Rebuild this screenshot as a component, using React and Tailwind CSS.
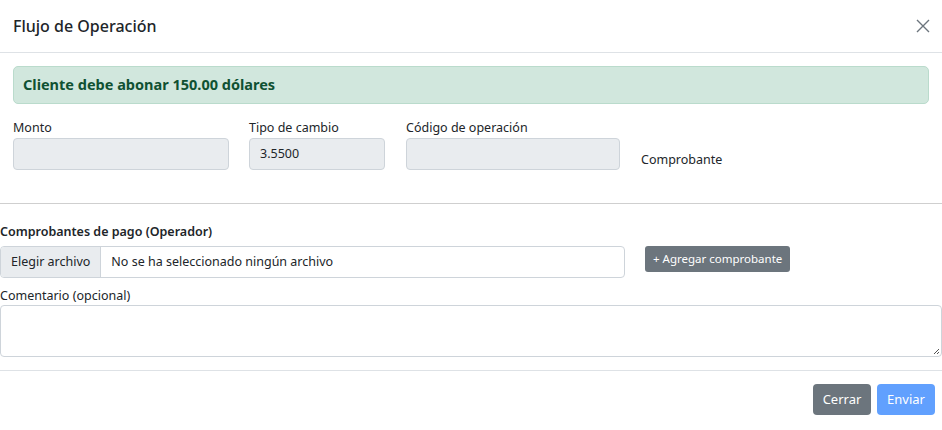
export default function App() {
  return (
    <div className="w-[942px] h-[430px] overflow-hidden bg-white text-[#212529] font-['Noto_Sans',sans-serif]">
      {/* header */}
      <div className="flex items-center justify-between h-[53px] border-b border-[#dee2e6] pl-[13px] pr-[8px]">
        <h5 className="text-[16px] font-medium leading-none">Flujo de Operación</h5>
        <button className="w-[22px] h-[22px] flex items-center justify-center text-[#6c757d]">
          <svg width="14" height="14" viewBox="0 0 14 14" fill="none" stroke="currentColor" strokeWidth="1.4">
            <path d="M1 1L13 13M13 1L1 13" />
          </svg>
        </button>
      </div>

      {/* body */}
      <div className="px-[13px] pt-[13px]">
        <div className="h-[38px] flex items-center px-[9px] rounded-[5px] bg-[#d1e7dd] border border-[#badbcc] text-[#0f5132] font-bold text-[14.5px]">
          Cliente debe abonar 150.00 dólares
        </div>

        <div className="flex items-end mt-[14px] text-[12.5px]">
          <div className="w-[216px]">
            <label className="block leading-[20px]">Monto</label>
            <div className="h-[32px] rounded-[4px] bg-[#e9ecef] border border-[#ced4da]" />
          </div>
          <div className="w-[136px] ml-[20px]">
            <label className="block leading-[20px]">Tipo de cambio</label>
            <div className="h-[32px] rounded-[4px] bg-[#e9ecef] border border-[#ced4da] flex items-center px-[10px]">3.5500</div>
          </div>
          <div className="w-[214px] ml-[21px]">
            <label className="block leading-[20px]">Código de operación</label>
            <div className="h-[32px] rounded-[4px] bg-[#e9ecef] border border-[#ced4da]" />
          </div>
          <div className="ml-[21px] leading-[20px]">Comprobante</div>
        </div>
      </div>

      <div className="mt-[33px] border-t border-[#cfcfcf]" />

      {/* comprobantes */}
      <div className="text-[12.5px]">
        <div className="mt-[18px] font-semibold leading-[20px]">Comprobantes de pago (Operador)</div>
        <div className="flex items-start mt-[4px]">
          <div className="w-[625px] h-[32px] flex rounded-[4px] border border-[#ced4da] overflow-hidden">
            <div className="px-[10px] flex items-center bg-[#e9ecef] border-r border-[#ced4da]">Elegir archivo</div>
            <div className="px-[10px] flex items-center">No se ha seleccionado ningún archivo</div>
          </div>
          <button className="ml-[20px] h-[26px] px-[8px] rounded-[3px] bg-[#6c757d] text-white text-[11.5px]">+ Agregar comprobante</button>
        </div>
        <div className="mt-[9px] leading-[18px]">Comentario (opcional)</div>
        <div className="h-[52px] rounded-[4px] border border-[#ced4da] relative">
          <svg className="absolute right-[1px] bottom-[1px]" width="7" height="7" viewBox="0 0 7 7" stroke="#555" strokeWidth="1">
            <path d="M1 6L6 1M4 6L6 4" />
          </svg>
        </div>
      </div>

      <div className="mt-[13px] border-t border-[#dee2e6]" />

      <div className="flex justify-end gap-[6px] pr-[7px] pt-[13px] text-[13px]">
        <button className="w-[58px] h-[31px] rounded-[4px] bg-[#6c757d] text-white">Cerrar</button>
        <button className="w-[58px] h-[31px] rounded-[4px] bg-[#61a0fe] text-white">Enviar</button>
      </div>
    </div>
  );
}
